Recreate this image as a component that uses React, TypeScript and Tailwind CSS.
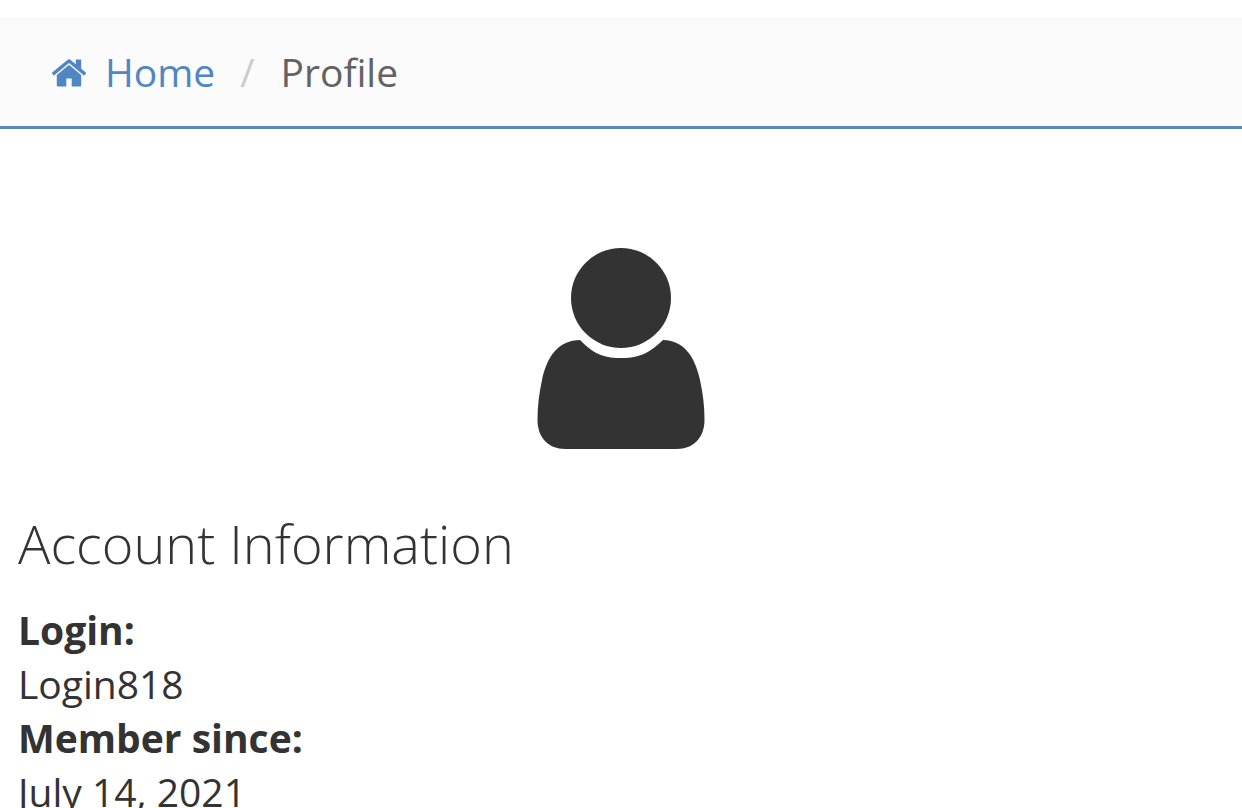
export default function App() {
  return (
    <div className="h-[808px] overflow-hidden bg-white font-['Open_Sans',sans-serif] text-[#333333]">
      <div className="mt-[18px] flex h-[111px] items-center border-t-2 border-b-[3px] border-t-[#f7f7f7] border-b-[#5b89b8] bg-[#fbfbfb] pl-[50px] text-[39px] leading-[54px]">
        <svg viewBox="0 0 1792 1792" className="h-[38px] w-[38px] fill-[#5087c3]">
          <path d="M1472 992v480q0 26-19 45t-45 19h-384v-384h-256v384h-384q-26 0-45-19t-19-45v-480q0-1 .5-3t.5-3l575-474 575 474q1 2 1 6zm223-69l-62 74q-8 9-21 11h-3q-13 0-21-7l-692-577-692 577q-12 8-24 7-13-2-21-11l-62-74q-8-10-7-23.500t11-21.500l719-599q32-26 76-26t76 26l244 204v-195q0-14 9-23t23-9h192q14 0 23 9t9 23v408l219 182q10 8 11 21.500t-7 23.500z" />
        </svg>
        <a className="mt-[-2px] ml-[17px] text-[#5087c3]">Home</a>
        <span className="mt-[-2px] ml-[25px] text-[#cccccc]">/</span>
        <span className="mt-[-2px] ml-[26px] text-[#636363]">Profile</span>
      </div>
      <div className="flex justify-center pt-[119px]">
        <svg viewBox="0 0 168 201" className="h-[201px] w-[168px] fill-[#333333]">
          <circle cx="84" cy="50" r="50" />
          <path d="M43 92 C58 108 70 110 84 110 C98 110 110 108 126 92 C146 92 158 108 163 132 C166 146 167.500 158 167.500 172 C167.500 190 156 201 140 201 L28 201 C12 201 .5 190 .5 172 C.5 158 2 146 5 132 C10 108 22 92 43 92 Z" />
        </svg>
      </div>
      <div className="pl-[18px]">
        <h1 className="mt-[58px] text-[54px] leading-[72px] font-light">Account Information</h1>
        <div className="mt-[24px] text-[39px] leading-[54px]">
          <div className="font-bold">Login:</div>
          <div>Login818</div>
          <div className="font-bold">Member since:</div>
          <div>July 14, 2021</div>
        </div>
      </div>
    </div>
  );
}
